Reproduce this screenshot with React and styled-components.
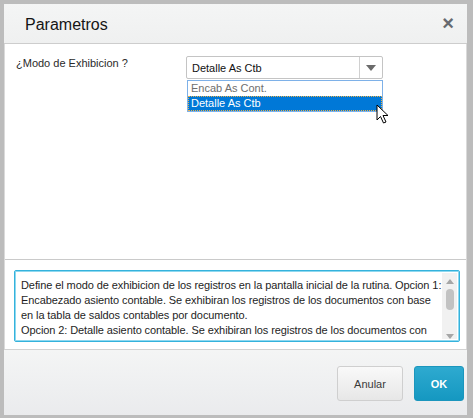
import React from 'react';
import styled, { createGlobalStyle } from 'styled-components';

const GlobalStyle = createGlobalStyle`
  html, body {
    margin: 0;
    padding: 0;
    background: #bcbcbc;
  }
  body {
    font-family: "Liberation Sans", Arial, sans-serif;
  }
`;

const Page = styled.div`
  box-sizing: border-box;
  width: 473px;
  height: 418px;
  padding: 4px 6px 3px 4px;
`;

const Dialog = styled.div`
  height: 100%;
  display: flex;
  flex-direction: column;
  background: #fff;
`;

const Header = styled.header`
  height: 40px;
  flex: none;
  box-sizing: border-box;
  display: flex;
  align-items: center;
  justify-content: space-between;
  padding: 3px 13px 0 21px;
  background: linear-gradient(#f4f5f5, #eff0f0);
  border-bottom: 1px solid #cdcdcd;
`;

const Title = styled.h1`
  margin: 0;
  font-size: 16px;
  font-weight: normal;
  color: #151515;
`;

const Close = styled.span`
  font-size: 20px;
  font-weight: bold;
  color: #666a70;
  line-height: 1;
  margin-top: -4px;
`;

const Body = styled.div`
  flex: 1;
  display: flex;
  flex-direction: column;
  border-left: 1px solid #dadada;
  border-right: 1px solid #dadada;
`;

const Panel = styled.section`
  height: 216px;
  flex: none;
  box-sizing: border-box;
  border-bottom: 1px solid #cacaca;
  padding: 12px 11px;
`;

const FieldRow = styled.div`
  display: flex;
  align-items: flex-start;
`;

const Label = styled.label`
  width: 170px;
  flex: none;
  font-size: 11px;
  color: #2a2a2a;
  padding-top: 1px;
`;

const SelectWrap = styled.div`
  position: relative;
  width: 197px;
`;

const SelectBox = styled.div`
  height: 23px;
  box-sizing: border-box;
  display: flex;
  border: 1px solid #c4c4c4;
  border-radius: 2px;
  background: #fff;
`;

const SelectValue = styled.div`
  flex: 1;
  display: flex;
  align-items: center;
  padding-left: 5px;
  font-size: 11px;
  color: #111;
`;

const ArrowCell = styled.div`
  width: 22px;
  display: flex;
  align-items: center;
  justify-content: center;
  border-left: 1px solid #d0d0d0;
`;

const Triangle = styled.span`
  width: 0;
  height: 0;
  border-left: 5px solid transparent;
  border-right: 5px solid transparent;
  border-top: 6px solid #6b6b6b;
`;

const OptionList = styled.ul`
  position: absolute;
  top: 24px;
  left: 1px;
  width: 196px;
  box-sizing: border-box;
  margin: 0;
  padding: 0;
  list-style: none;
  border: 1px solid #7eb1e8;
  background: #fff;
`;

const Option = styled.li`
  height: 15px;
  line-height: 15px;
  box-sizing: border-box;
  padding-left: 3px;
  font-size: 11px;
  color: ${p => (p.$selected ? '#fff' : '#6e6e6e')};
  background: ${p => (p.$selected ? '#0078d7' : '#fff')};
  outline: ${p => (p.$selected ? '1px dotted #e9b04a' : 'none')};
  outline-offset: -1px;
`;

const Cursor = styled.svg`
  position: absolute;
  left: 190px;
  top: 48px;
`;

const Lower = styled.div`
  flex: 1;
  padding: 10px 6px 7px 9px;
  display: flex;
`;

const TextArea = styled.div`
  flex: 1;
  display: flex;
  box-sizing: border-box;
  border: 1px solid #34b2dc;
  box-shadow: inset 0 0 0 1px #8fd8ef;
  border-radius: 2px;
  padding: 2px;
  overflow: hidden;
`;

const HelpText = styled.div`
  flex: 1;
  padding: 5px 0 0 4px;
  font-size: 11px;
  line-height: 15px;
  letter-spacing: -0.09px;
  color: #1e1e1e;
  white-space: nowrap;
  overflow: hidden;
`;

const ScrollBar = styled.div`
  width: 15px;
  flex: none;
  display: flex;
  flex-direction: column;
  align-items: center;
  background: #f1f1f1;
  padding-top: 6px;
`;

const ScrollArrow = styled.span`
  width: 0;
  height: 0;
  border-left: 4px solid transparent;
  border-right: 4px solid transparent;
  ${p => (p.$down ? 'border-top: 5px solid #a6a6a6;' : 'border-bottom: 5px solid #a6a6a6;')}
`;

const Thumb = styled.span`
  width: 8px;
  height: 21px;
  border-radius: 4px;
  background: #c2c2c2;
  margin: 5px 0 auto;
`;

const Footer = styled.footer`
  height: 66px;
  flex: none;
  box-sizing: border-box;
  display: flex;
  justify-content: flex-end;
  align-items: flex-start;
  gap: 11px;
  padding: 16px 3px 0 0;
  border-top: 1px solid #d2d2d2;
  background: linear-gradient(#f4f5f5, #eaebed);
`;

const Button = styled.button`
  height: 35px;
  width: ${p => (p.$primary ? '50px' : '66px')};
  box-sizing: border-box;
  border-radius: 3px;
  font-family: "Liberation Sans", Arial, sans-serif;
  font-size: 11px;
  font-weight: ${p => (p.$primary ? 'bold' : 'normal')};
  color: ${p => (p.$primary ? '#fff' : '#3a3a3a')};
  border: 1px solid ${p => (p.$primary ? '#1b96bd' : '#cfcfcf')};
  background: ${p =>
    p.$primary
      ? 'linear-gradient(#2eaad0, #1598c1)'
      : 'linear-gradient(#f9f9f9, #e7e7e7)'};
  padding: 0;
`;

export default function App() {
  return (
    <>
      <GlobalStyle />
      <Page>
        <Dialog>
          <Header>
            <Title>Parametros</Title>
            <Close>×</Close>
          </Header>
          <Body>
            <Panel>
              <FieldRow>
                <Label>¿Modo de Exhibicion ?</Label>
                <SelectWrap>
                  <SelectBox>
                    <SelectValue>Detalle As Ctb</SelectValue>
                    <ArrowCell>
                      <Triangle />
                    </ArrowCell>
                  </SelectBox>
                  <OptionList>
                    <Option>Encab As Cont.</Option>
                    <Option $selected>Detalle As Ctb</Option>
                  </OptionList>
                  <Cursor width="14" height="21" viewBox="0 0 14 21">
                    <path
                      d="M1 1 L1 16 L4.5 12.5 L7.5 19 L10 18 L7 11.5 L12 11.5 Z"
                      fill="#fff"
                      stroke="#000"
                      strokeWidth="1"
                      strokeLinejoin="miter"
                    />
                  </Cursor>
                </SelectWrap>
              </FieldRow>
            </Panel>
            <Lower>
              <TextArea>
                <HelpText>
                  Define el modo de exhibicion de los registros en la pantalla inicial de la rutina. Opcion 1:
                  <br />
                  Encabezado asiento contable. Se exhibiran los registros de los documentos con base
                  <br />
                  en la tabla de saldos contables por documento.
                  <br />
                  Opcion 2: Detalle asiento contable. Se exhibiran los registros de los documentos con
                </HelpText>
                <ScrollBar>
                  <ScrollArrow />
                  <Thumb />
                  <ScrollArrow $down />
                </ScrollBar>
              </TextArea>
            </Lower>
          </Body>
          <Footer>
            <Button>Anular</Button>
            <Button $primary>OK</Button>
          </Footer>
        </Dialog>
      </Page>
    </>
  );
}
